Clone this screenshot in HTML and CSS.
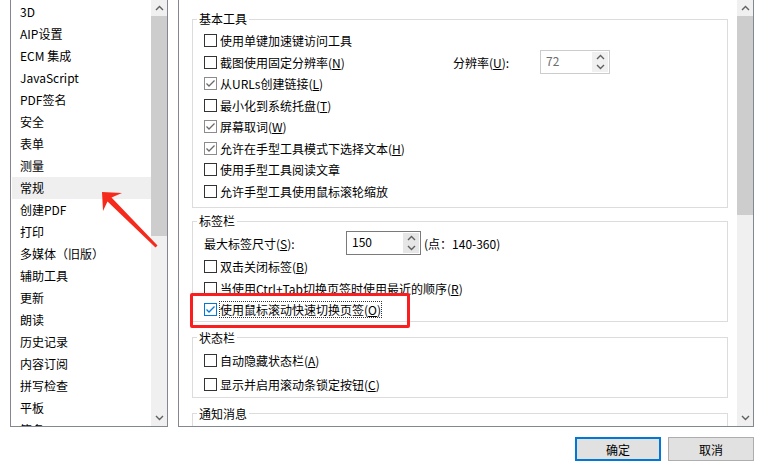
FILE: index.html
```html
<!DOCTYPE html>
<html>
<head>
    <meta charset="utf-8">
    <title>首选项</title>
    <link rel="stylesheet" href="styles.css">
</head>
<body>
<div class="dialog">
    <div class="panels">
        <!-- category list -->
        <div class="cat-list">
            <ul class="cats">
                <li>3D</li>
                <li>AIP设置</li>
                <li>ECM 集成</li>
                <li>JavaScript</li>
                <li>PDF签名</li>
                <li>安全</li>
                <li>表单</li>
                <li>测量</li>
                <li class="selected">常规</li>
                <li>创建PDF</li>
                <li>打印</li>
                <li>多媒体（旧版）</li>
                <li>辅助工具</li>
                <li>更新</li>
                <li>朗读</li>
                <li>历史记录</li>
                <li>内容订阅</li>
                <li>拼写检查</li>
                <li>平板</li>
                <li>签名</li>
            </ul>
            <div class="vscroll vscroll-list">
                <div class="sb-arrow"><svg width="9" height="6" viewBox="0 0 9 6"><polyline points="1,5 4.5,1.5 8,5" /></svg></div>
                <div class="sb-thumb"></div>
                <div class="sb-track"></div>
                <div class="sb-arrow"><svg width="9" height="6" viewBox="0 0 9 6"><polyline points="1,1 4.5,4.5 8,1" /></svg></div>
            </div>
        </div>

        <!-- settings page -->
        <div class="prefs">
            <div class="prefs-body">
                <fieldset class="group group-1">
                    <legend>基本工具</legend>
                    <div class="row"><label class="check"><span class="box"></span>使用单键加速键访问工具</label></div>
                    <div class="row">
                        <label class="check check-wide"><span class="box"></span>截图使用固定分辨率(<u>N</u>)</label>
                        <span class="field-label res-label">分辨率(<u>U</u>):</span>
                        <div class="spin spin-disabled">
                            <span class="spin-value">72</span>
                            <span class="spin-btns">
                                <svg width="9" height="6" viewBox="0 0 9 6"><polyline points="1,5 4.5,1.5 8,5" /></svg>
                                <svg width="9" height="6" viewBox="0 0 9 6"><polyline points="1,1 4.5,4.5 8,1" /></svg>
                            </span>
                        </div>
                    </div>
                    <div class="row"><label class="check"><span class="box box-on"><svg width="11" height="11" viewBox="0 0 11 11"><polyline points="1.5,5.5 4,8 9.5,2.5" /></svg></span>从URLs创建链接(<u>L</u>)</label></div>
                    <div class="row"><label class="check"><span class="box"></span>最小化到系统托盘(<u>T</u>)</label></div>
                    <div class="row"><label class="check"><span class="box box-on"><svg width="11" height="11" viewBox="0 0 11 11"><polyline points="1.5,5.5 4,8 9.5,2.5" /></svg></span>屏幕取词(<u>W</u>)</label></div>
                    <div class="row"><label class="check"><span class="box box-on"><svg width="11" height="11" viewBox="0 0 11 11"><polyline points="1.5,5.5 4,8 9.5,2.5" /></svg></span>允许在手型工具模式下选择文本(<u>H</u>)</label></div>
                    <div class="row"><label class="check"><span class="box"></span>使用手型工具阅读文章</label></div>
                    <div class="row"><label class="check"><span class="box"></span>允许手型工具使用鼠标滚轮缩放</label></div>
                </fieldset>

                <fieldset class="group group-2">
                    <legend>标签栏</legend>
                    <div class="row row-tall">
                        <span class="field-label size-label">最大标签尺寸(<u>S</u>):</span>
                        <div class="spin spin-active">
                            <span class="spin-value">150</span>
                            <span class="spin-btns">
                                <svg width="9" height="6" viewBox="0 0 9 6"><polyline points="1,5 4.5,1.5 8,5" /></svg>
                                <svg width="9" height="6" viewBox="0 0 9 6"><polyline points="1,1 4.5,4.5 8,1" /></svg>
                            </span>
                        </div>
                        <span class="hint">(点：140-360)</span>
                    </div>
                    <div class="row"><label class="check"><span class="box"></span>双击关闭标签(<u>B</u>)</label></div>
                    <div class="row"><label class="check"><span class="box"></span>当使用Ctrl+Tab切换页签时使用最近的顺序(<u>R</u>)</label></div>
                    <div class="row"><label class="check"><span class="box box-focus"><svg width="11" height="11" viewBox="0 0 11 11"><polyline points="1.5,5.5 4,8 9.5,2.5" /></svg></span><span class="focus">使用鼠标滚动快速切换页签(<u>O</u>)</span></label></div>
                </fieldset>

                <fieldset class="group group-3">
                    <legend>状态栏</legend>
                    <div class="row"><label class="check"><span class="box"></span>自动隐藏状态栏(<u>A</u>)</label></div>
                    <div class="row"><label class="check"><span class="box"></span>显示并启用滚动条锁定按钮(<u>C</u>)</label></div>
                </fieldset>

                <fieldset class="group group-4">
                    <legend>通知消息</legend>
                </fieldset>
            </div>
            <div class="vscroll vscroll-prefs">
                <div class="sb-arrow"><svg width="9" height="6" viewBox="0 0 9 6"><polyline points="1,5 4.5,1.5 8,5" /></svg></div>
                <div class="sb-thumb"></div>
                <div class="sb-track"></div>
                <div class="sb-arrow"><svg width="9" height="6" viewBox="0 0 9 6"><polyline points="1,1 4.5,4.5 8,1" /></svg></div>
            </div>
        </div>
    </div>

    <div class="buttons">
        <button class="btn btn-default">确定</button>
        <button class="btn">取消</button>
    </div>

    <!-- annotation marks drawn over the dialog -->
    <div class="mark-box"></div>
    <svg class="mark-arrow" width="775" height="475" viewBox="0 0 775 475">
        <polygon points="102,192 122,193 111.5,197.5 157.5,245.5 155.5,247.5 107.5,201.5 103,211" />
    </svg>
</div>
</body>
</html>
```

FILE: styles.css
```css
* {
    box-sizing: border-box;
}

body {
    margin: 0;
    background: #fff;
    color: #000;
    font-family: "Noto Sans CJK SC", "Liberation Sans", sans-serif;
    font-size: 12px;
}

.dialog {
    position: relative;
    width: 775px;
    height: 475px;
    overflow: hidden;
}

.panels {
    display: flex;
    gap: 10px;
    height: 428px;
    margin-top: -1px;
    padding-left: 10px;
}

/* left category list */
.cat-list {
    display: flex;
    width: 158px;
    border: 1px solid #828790;
    overflow: hidden;
}

.cats {
    flex: 1;
    margin: 0;
    padding: 1px 0 0;
    list-style: none;
}

.cats li {
    height: 22px;
    line-height: 22px;
    padding-left: 9px;
    white-space: nowrap;
}

.cats .selected {
    background: #efefef;
    margin-left: 1px;
    padding-left: 8px;
}

/* scrollbars */
.vscroll {
    display: flex;
    flex-direction: column;
    width: 16px;
    background: #f0f0f0;
}

.sb-arrow {
    display: flex;
    align-items: center;
    justify-content: center;
    height: 16px;
}

.sb-arrow polyline,
.spin-btns polyline {
    fill: none;
    stroke: #606060;
    stroke-width: 1.4;
}

.sb-thumb {
    background: #cdcdcd;
}

.vscroll-list .sb-thumb {
    height: 220px;
}

.vscroll-prefs .sb-thumb {
    height: 199px;
}

.sb-track {
    flex: 1;
}

/* right settings page */
.prefs {
    display: flex;
    width: 576px;
    border: 1px solid #828790;
    overflow: hidden;
}

.prefs-body {
    flex: 1;
    padding: 0 9px 0 13px;
}

.group {
    margin: 0;
    min-width: 0;
    border: 1px solid #dcdcdc;
    padding: 3px 0 5px 11px;
}

.group legend {
    margin-left: -7px;
    padding: 0 2px;
    line-height: 16px;
}

.group-1 {
    margin-top: 11px;
}

.group-2 {
    margin-top: 5px;
    padding-top: 1px;
    padding-bottom: 0;
}

.group-3 {
    margin-top: 8px;
    padding-top: 3px;
    padding-bottom: 0;
}

.group-3 .row {
    height: 24px;
}

.group-4 {
    margin-top: 8px;
    height: 40px;
}

.row {
    display: flex;
    align-items: center;
    height: 21.5px;
    white-space: nowrap;
}

.row-tall {
    height: 26px;
}

.check {
    display: flex;
    align-items: center;
}

.check-wide {
    width: 249px;
    flex-shrink: 0;
}

.box {
    display: flex;
    align-items: center;
    justify-content: center;
    width: 13px;
    height: 13px;
    margin-right: 3px;
    border: 1px solid #333;
    background: #fff;
}

.box polyline {
    fill: none;
    stroke-width: 1.3;
}

.box-on {
    border-color: #8c8c8c;
}

.box-on polyline {
    stroke: #6a6a6a;
}

.box-focus {
    border-color: #0078d7;
}

.box-focus polyline {
    stroke: #0078d7;
}

.focus {
    outline: 1px dotted #333;
    line-height: 15px;
}

.field-label {
    flex-shrink: 0;
}

.res-label {
    width: 87px;
}

.size-label {
    width: 142px;
}

/* spin boxes */
.spin {
    display: flex;
    height: 24px;
    border: 1px solid #cccccc;
}

.spin-disabled {
    width: 70px;
    color: #6d6d6d;
}

.spin-active {
    width: 75px;
    border-color: #7a7a7a;
}

.spin-value {
    flex: 1;
    padding: 1px 0 0 5px;
    line-height: 18px;
}

.spin-btns {
    display: flex;
    flex-direction: column;
    align-items: center;
    justify-content: center;
    gap: 4px;
    width: 16px;
    margin: 1px;
    background: #f0f0f0;
}

.spin-active .spin-btns {
    background: #e6e6e6;
}

.hint {
    margin-left: 3px;
}

/* dialog buttons */
.buttons {
    display: flex;
    justify-content: flex-end;
    gap: 7px;
    padding: 10px 21px 0 0;
}

.btn {
    width: 86px;
    height: 24px;
    padding: 0;
    background: #e1e1e1;
    border: 1px solid #adadad;
    color: #000;
    font: inherit;
}

.btn-default {
    border: 2px solid #0078d7;
}

/* red annotation */
.mark-box {
    position: absolute;
    left: 190px;
    top: 293px;
    width: 220px;
    height: 35px;
    border: 3px solid #fa1e1e;
    border-radius: 2px;
}

.mark-arrow {
    position: absolute;
    left: 0;
    top: 0;
    pointer-events: none;
}

.mark-arrow polygon {
    fill: #f52a1c;
}
```
